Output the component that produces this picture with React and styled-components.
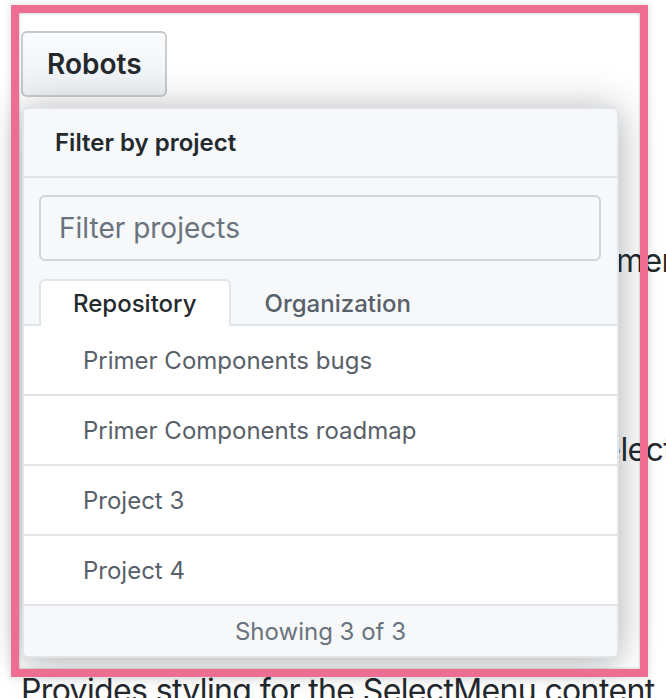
import React from 'react';
import styled, { createGlobalStyle } from 'styled-components';

const GlobalStyle = createGlobalStyle`
  html, body {
    margin: 0;
    padding: 0;
    overflow: hidden;
    background: #fff;
  }
  body {
    font-family: Inter, "Noto Sans", sans-serif;
    color: #24292e;
  }
  * { box-sizing: border-box; }
`;

const Page = styled.div`
  position: relative;
  width: 666px;
  height: 698px;
  overflow: hidden;
  padding: 31px 0 0 21px;
`;

// pink highlight frame drawn over the screenshot
const Highlight = styled.div`
  position: absolute;
  left: 11px;
  top: 5px;
  width: 637px;
  height: 672px;
  border: 8px solid #ed6d93;
  box-shadow: 0 0 8px rgba(0, 0, 0, 0.14), inset 0 0 3px rgba(0, 0, 0, 0.28);
  pointer-events: none;
  z-index: 5;
`;

const Button = styled.button`
  display: block;
  width: 146px;
  height: 66px;
  padding: 0 24px;
  border: 2px solid rgba(27, 31, 35, 0.2);
  border-radius: 6px;
  background: linear-gradient(-180deg, #fafbfc 0%, #eff3f6 90%);
  font: 600 28px/1 Inter, sans-serif;
  color: #24292e;
  text-align: left;
`;

const Content = styled.div`
  position: relative;
  display: flow-root;
`;

const DocLine = styled.p`
  margin: ${(p) => p.$gap}px 0 0;
  width: ${(p) => p.$width}px;
  font-size: 32px;
  line-height: 48px;
  letter-spacing: -0.64px;
  white-space: nowrap;
  text-align: ${(p) => p.$align || 'left'};
  color: #24292e;
`;

const Menu = styled.div`
  position: absolute;
  top: 10px;
  left: 1px;
  width: 597px;
  background: #fff;
  border: 2px solid #e1e4e8;
  border-radius: 6px;
  overflow: hidden;
  box-shadow: 0 0 40px rgba(27, 31, 35, 0.26), 0 8px 24px rgba(27, 31, 35, 0.12);
  z-index: 2;
`;

const Header = styled.div`
  display: flex;
  align-items: center;
  height: 69px;
  padding-left: 31px;
  background: #f6f8fa;
  border-bottom: 2px solid #e1e4e8;
  font-size: 24px;
  font-weight: 600;
  color: #24292e;
`;

const Filter = styled.div`
  padding: 17px 16px 0 15px;
  background: #f6f8fa;
`;

const FilterInput = styled.input`
  display: block;
  width: 100%;
  height: 66px;
  padding: 0 18px;
  border: 2px solid #d1d5da;
  border-radius: 6px;
  background: #f6f8fa;
  font: 400 28px Inter, sans-serif;
  color: #24292e;
  outline: none;
  &::placeholder { color: #6a737d; }
`;

const Tabs = styled.div`
  display: flex;
  align-items: flex-start;
  margin: 18px -16px 0 -15px;
  padding-left: 15px;
  height: 47px;
  border-bottom: 2px solid #e1e4e8;
`;

const Tab = styled.div`
  display: flex;
  align-items: center;
  height: 47px;
  padding: 0 32px;
  border: 2px solid ${(p) => (p.$active ? '#e1e4e8' : 'transparent')};
  border-bottom: none;
  border-radius: 6px 6px 0 0;
  background: ${(p) => (p.$active ? '#fff' : 'transparent')};
  font-size: 24px;
  font-weight: 500;
  color: ${(p) => (p.$active ? '#24292e' : '#586069')};
  position: relative;
  z-index: 1;
`;

const Item = styled.div`
  display: flex;
  align-items: center;
  height: 70px;
  padding-left: 59px;
  border-bottom: 2px solid #e1e4e8;
  font-size: 24px;
  color: #586069;
`;

const Footer = styled.div`
  display: flex;
  align-items: center;
  justify-content: center;
  height: 50px;
  background: #f6f8fa;
  font-size: 24px;
  color: #6a737d;
`;

const projects = ['Primer Components bugs', 'Primer Components roadmap', 'Project 3', 'Project 4'];

export default function App() {
  return (
    <>
      <GlobalStyle />
      <Page>
        <Button>Robots</Button>
        <Content>
          <DocLine $gap={140} $width={677} $align="right">
            Wraps the tabs in the menu
          </DocLine>
          <DocLine $gap={141} $width={652} $align="right">
            Wraps the content of select
          </DocLine>
          <DocLine $gap={193}>Provides styling for the SelectMenu content</DocLine>

          <Menu>
            <Header>Filter by project</Header>
            <Filter>
              <FilterInput placeholder="Filter projects" readOnly />
              <Tabs>
                <Tab $active>Repository</Tab>
                <Tab>Organization</Tab>
              </Tabs>
            </Filter>
            {projects.map((name) => (
              <Item key={name}>{name}</Item>
            ))}
            <Footer>Showing 3 of 3</Footer>
          </Menu>
        </Content>
        <Highlight />
      </Page>
    </>
  );
}
